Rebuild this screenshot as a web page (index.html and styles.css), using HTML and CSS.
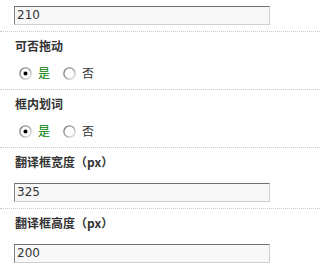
FILE: index.html
```html
<!DOCTYPE html>
<html>
<head>
<meta charset="utf-8">
<link rel="stylesheet" href="styles.css">
</head>
<body>
<div class="list">
  <div class="item item-first">
    <div class="field">210</div>
  </div>
  <div class="item">
    <div class="label">可否拖动</div>
    <div class="radios">
      <span class="radio on"><svg width="13" height="13" viewBox="0 0 13 13"><defs><linearGradient id="g1" x1="0" y1="0" x2="1" y2="1"><stop offset="0" stop-color="#6f6f6f"/><stop offset="0.55" stop-color="#a8a8a8"/><stop offset="1" stop-color="#ececec"/></linearGradient></defs><circle cx="6.5" cy="6.5" r="5.6" fill="#fff" stroke="url(#g1)" stroke-width="1.4"/><circle cx="6.5" cy="6.5" r="2" fill="#000"/></svg></span>
      <span class="opt yes">是</span>
      <span class="radio"><svg width="13" height="13" viewBox="0 0 13 13"><circle cx="6.5" cy="6.5" r="5.6" fill="#fff" stroke="url(#g1)" stroke-width="1.4"/></svg></span>
      <span class="opt">否</span>
    </div>
  </div>
  <div class="item">
    <div class="label">框内划词</div>
    <div class="radios">
      <span class="radio on"><svg width="13" height="13" viewBox="0 0 13 13"><circle cx="6.5" cy="6.5" r="5.6" fill="#fff" stroke="url(#g1)" stroke-width="1.4"/><circle cx="6.5" cy="6.5" r="2" fill="#000"/></svg></span>
      <span class="opt yes">是</span>
      <span class="radio"><svg width="13" height="13" viewBox="0 0 13 13"><circle cx="6.5" cy="6.5" r="5.6" fill="#fff" stroke="url(#g1)" stroke-width="1.4"/></svg></span>
      <span class="opt">否</span>
    </div>
  </div>
  <div class="item item-input">
    <div class="label">翻译框宽度（px）</div>
    <div class="field">325</div>
  </div>
  <div class="item item-input">
    <div class="label">翻译框高度（px）</div>
    <div class="field">200</div>
  </div>
</div>
</body>
</html>
```

FILE: styles.css
```css
html, body {
  margin: 0;
  padding: 0;
  background: #fff;
  overflow: hidden;
}
.list {
  display: flex;
  flex-direction: column;
}
.item {
  border-bottom: 1px dotted #c8c8c8;
  padding: 5px 0 7px 14px;
}
.item-first {
  padding-top: 6px;
  padding-bottom: 6px;
}
.label {
  font-family: "Noto Sans CJK SC", sans-serif;
  font-weight: bold;
  font-size: 12px;
  line-height: 18px;
  height: 18px;
  color: #333;
  margin-left: 1px;
}
.item .label + .radios {
  margin-top: 9px;
}
.item-input .label {
  margin-bottom: 12px;
}
.item-input {
  padding-bottom: 6px;
}
.field {
  box-sizing: border-box;
  width: 256px;
  height: 19px;
  border: 1px solid #cfcfcf;
  border-top-color: #707070;
  border-left-color: #808080;
  background: #f8f8f8;
  font-family: "DejaVu Sans", Verdana, sans-serif;
  font-size: 12px;
  line-height: 17px;
  color: #333;
  padding-left: 2px;
}
.radios {
  display: flex;
  align-items: center;
  height: 18px;
  padding-left: 5px;
  font-family: "Noto Sans CJK SC", sans-serif;
  font-size: 12px;
  color: #333;
}
.radio {
  display: flex;
  width: 13px;
  height: 13px;
}
.opt {
  margin-left: 6px;
  margin-right: 13px;
  line-height: 18px;
}
.yes {
  color: #008000;
}
```
